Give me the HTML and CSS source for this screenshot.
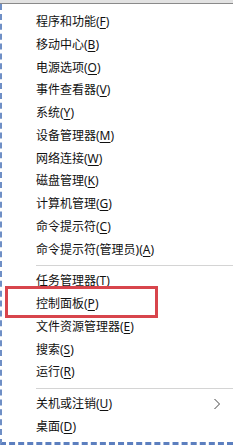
FILE: index.html
```html
<!DOCTYPE html>
<html lang="zh-CN">
<head>
<meta charset="utf-8">
<link rel="stylesheet" href="styles.css">
</head>
<body>
<div class="screen">
  <div class="topbar"></div>
  <div class="menu">
    <div class="group">
      <div class="item"><span>程序和功能(<u>F</u>)</span></div>
      <div class="item"><span>移动中心(<u>B</u>)</span></div>
      <div class="item"><span>电源选项(<u>O</u>)</span></div>
      <div class="item"><span>事件查看器(<u>V</u>)</span></div>
      <div class="item"><span>系统(<u>Y</u>)</span></div>
      <div class="item"><span>设备管理器(<u>M</u>)</span></div>
      <div class="item"><span>网络连接(<u>W</u>)</span></div>
      <div class="item"><span>磁盘管理(<u>K</u>)</span></div>
      <div class="item"><span>计算机管理(<u>G</u>)</span></div>
      <div class="item"><span>命令提示符(<u>C</u>)</span></div>
      <div class="item"><span>命令提示符(管理员)(<u>A</u>)</span></div>
    </div>
    <div class="sep"></div>
    <div class="group">
      <div class="item"><span>任务管理器(<u>T</u>)</span></div>
      <div class="item"><span>控制面板(<u>P</u>)</span></div>
      <div class="item"><span>文件资源管理器(<u>E</u>)</span></div>
      <div class="item"><span>搜索(<u>S</u>)</span></div>
      <div class="item"><span>运行(<u>R</u>)</span></div>
    </div>
    <div class="sep"></div>
    <div class="group">
      <div class="item sub"><span>关机或注销(<u>U</u>)</span>
        <svg class="chev" width="8" height="12" viewBox="0 0 8 12"><polyline points="1.5,1 6.5,6 1.5,11" fill="none" stroke="#444" stroke-width="1"/></svg>
      </div>
      <div class="item"><span>桌面(<u>D</u>)</span></div>
    </div>
    <div class="highlight"></div>
  </div>
</div>
</body>
</html>
```
FILE: styles.css
```css
html, body {
  margin: 0;
  padding: 0;
  background: #fff;
}
.screen {
  width: 233px;
  height: 445px;
  overflow: hidden;
  display: flex;
  flex-direction: column;
  font-family: "Noto Sans", "Noto Sans CJK SC", sans-serif;
  font-size: 12px;
  color: #111;
}
.topbar {
  height: 3px;
  background: #e2e2e2;
  border-bottom: 1px solid #8a8a8a;
  flex: none;
}
.menu {
  position: relative;
  flex: 1;
  border-left: 2px dashed #6f8fc6;
  border-bottom: 3px dashed #5c7fbf;
  padding-top: 7px;
  background: #fff;
}
.item {
  height: 22.75px;
  line-height: 22.75px;
  padding-left: 34px;
  white-space: nowrap;
  display: flex;
  align-items: center;
}
.item u {
  text-decoration-thickness: 1px;
  text-underline-offset: 2px;
}
.sub {
  justify-content: space-between;
  padding-right: 12px;
}
.chev {
  display: block;
}
.sep {
  height: 1px;
  background: #d4d4d4;
  margin: 4px 0 4px 34px;
}
.highlight {
  position: absolute;
  left: 3px;
  top: 282px;
  width: 147px;
  height: 26px;
  border: 3px solid #d8454c;
}
```
